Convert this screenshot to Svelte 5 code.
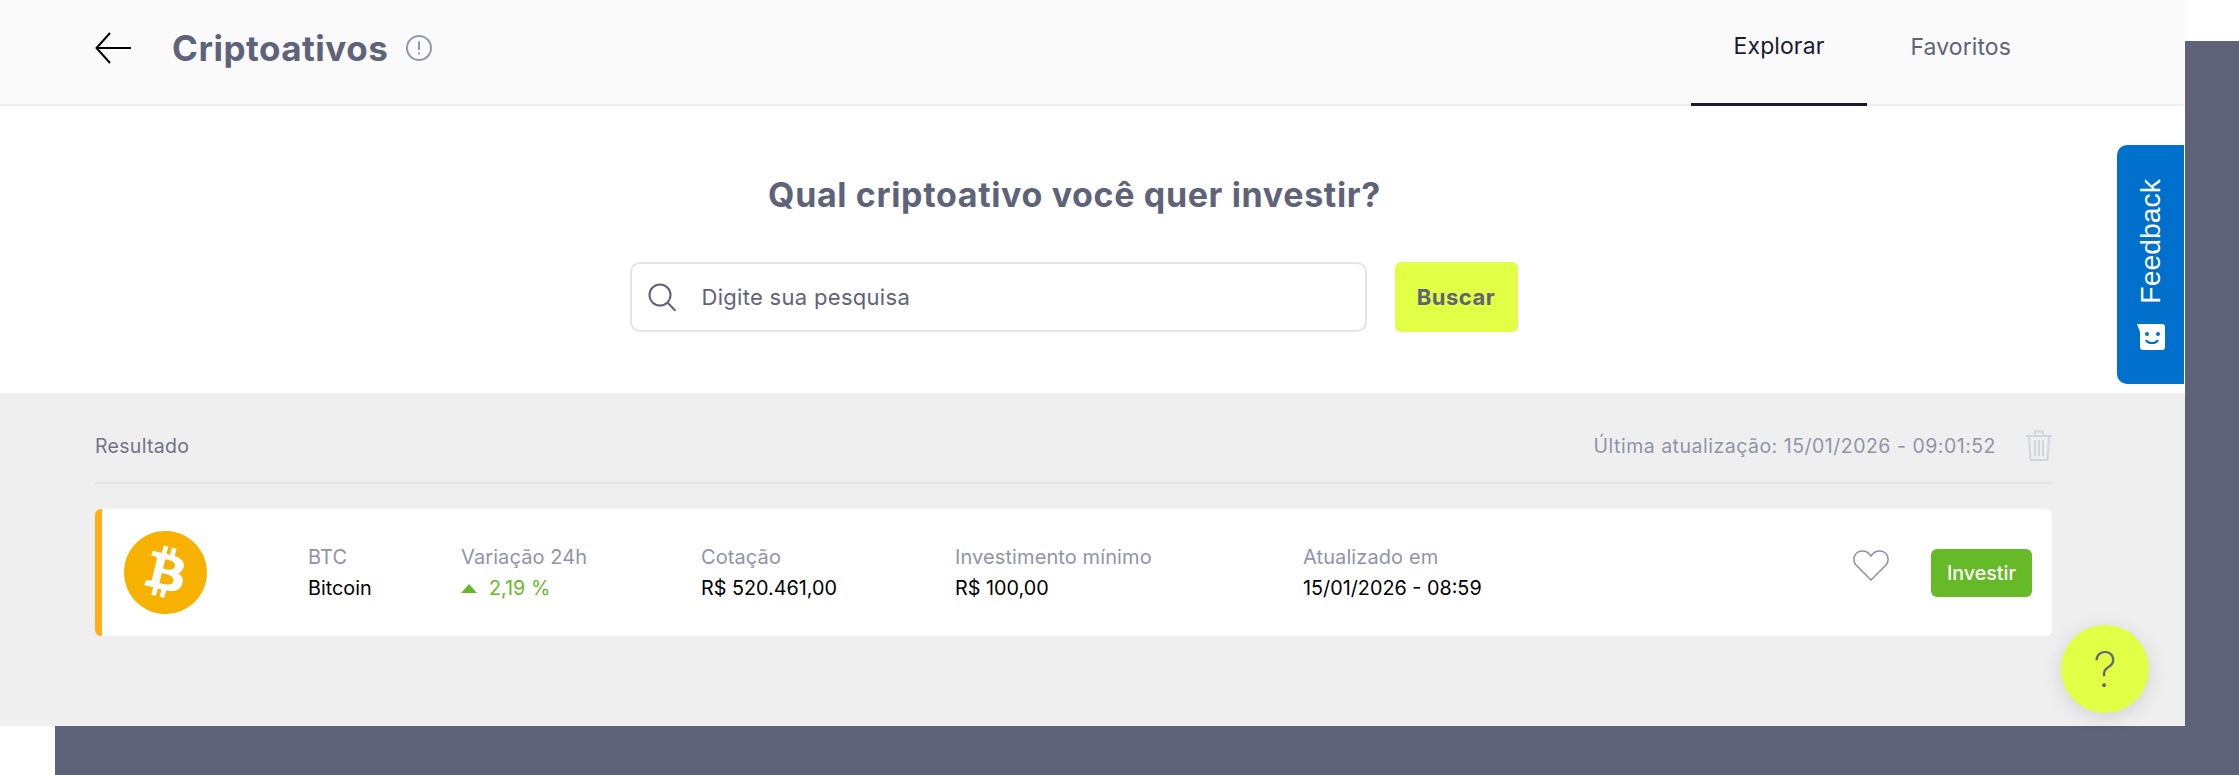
<script>
  let columns = [
    { label: 'BTC', value: 'Bitcoin', width: 153 },
    { label: 'Variação 24h', value: '2,19 %', width: 240, up: true },
    { label: 'Cotação', value: 'R$ 520.461,00', width: 254 },
    { label: 'Investimento mínimo', value: 'R$ 100,00', width: 348 },
    { label: 'Atualizado em', value: '15/01/2026 - 08:59', width: 300 }
  ];
</script>

<div class="stage">
  <div class="backdrop"></div>

  <main class="window">
    <header class="topbar">
      <div class="heading">
        <svg class="back" viewBox="0 0 36 32" width="36" height="32" fill="none" stroke="#000" stroke-width="2">
          <path d="M36 16H1.5M15 1 1.5 16 15 31" />
        </svg>
        <h1>Criptoativos</h1>
        <svg class="info" viewBox="0 0 26 26" width="26" height="26" fill="none" stroke="#9398ad" stroke-width="2">
          <circle cx="13" cy="13" r="12" />
          <path d="M13 6.5v8.5M13 17.5v2" />
        </svg>
      </div>
      <nav class="tabs">
        <span class="tab active">Explorar</span>
        <span class="tab">Favoritos</span>
      </nav>
    </header>

    <section class="search">
      <h2>Qual criptoativo você quer investir?</h2>
      <div class="search-row">
        <div class="field">
          <svg viewBox="0 0 28 28" width="28" height="28" fill="none" stroke="#5f6379" stroke-width="2">
            <circle cx="12" cy="12" r="10.5" />
            <path d="M19.5 19.5 27.5 28" />
          </svg>
          <span>Digite sua pesquisa</span>
        </div>
        <button class="find">Buscar</button>
      </div>
    </section>

    <section class="results">
      <div class="results-head">
        <span class="title">Resultado</span>
        <div class="updated">
          <span>Última atualização: 15/01/2026 - 09:01:52</span>
          <svg viewBox="0 0 26 31" width="26" height="31" fill="none" stroke="#d3d5de" stroke-width="2">
            <path d="M0 6h26M9 5V1.500h8V5M3 6l1.500 24h17L23 6M9 10v16M13 10v16M17 10v16" />
          </svg>
        </div>
      </div>

      <article class="card">
        <svg class="coin" viewBox="0 0 24 24" width="83" height="83">
          <path fill="#f7b100" d="M23.638 14.904c-1.602 6.43-8.113 10.34-14.542 8.736C2.67 22.05-1.244 15.525.362 9.105 1.962 2.67 8.475-1.243 14.9.358c6.43 1.605 10.342 8.115 8.738 14.548v-.002zm-6.35-4.613c.24-1.59-.974-2.45-2.64-3.03l.54-2.153-1.315-.33-.525 2.107c-.345-.087-.705-.167-1.064-.25l.526-2.127-1.32-.33-.54 2.165c-.285-.067-.565-.132-.84-.2l-1.815-.45-.35 1.407s.975.225.955.236c.535.136.63.486.615.766l-1.477 5.92c-.075.166-.24.406-.614.314.015.02-.96-.24-.96-.24l-.66 1.51 1.71.426.93.242-.54 2.19 1.32.327.54-2.17c.36.1.705.19 1.05.273l-.51 2.154 1.32.33.545-2.19c2.24.427 3.93.257 4.64-1.774.57-1.637-.03-2.58-1.217-3.196.854-.193 1.5-.76 1.68-1.93h.01zm-3.01 4.22c-.404 1.64-3.157.75-4.05.53l.72-2.9c.896.23 3.757.67 3.33 2.37zm.41-4.24c-.37 1.49-2.662.735-3.405.55l.654-2.64c.744.18 3.137.524 2.75 2.084v.006z" />
        </svg>
        <div class="cols">
          {#each columns as col}
            <div class="col" style="width: {col.width}px">
              <span class="label">{col.label}</span>
              <span class="value" class:up={col.up}>
                {#if col.up}<i class="arrow"></i>{/if}{col.value}
              </span>
            </div>
          {/each}
        </div>
        <svg class="heart" viewBox="0 0 36 31" width="36" height="31" fill="none" stroke="#8d90a6" stroke-width="1.500">
          <path d="M18 30 3 15C-1 10 1 1.500 9 1c4-.2 7 2 9 5 2-3 5-5.200 9-5 8 .5 10 9 6 14Z" />
        </svg>
        <button class="invest">Investir</button>
      </article>
    </section>

    <aside class="feedback">
      <span>Feedback</span>
      <svg viewBox="0 0 28 26" width="28" height="26">
        <path fill="#fff" d="M0 0h25a3 3 0 0 1 3 3v20a3 3 0 0 1-3 3H6a3 3 0 0 1-3-3V8Z" />
        <circle cx="10" cy="10" r="2" fill="#0070cd" />
        <circle cx="21" cy="10" r="2" fill="#0070cd" />
        <path d="M9 16c2 4 10 4 12 0" fill="none" stroke="#0070cd" stroke-width="2.200" />
      </svg>
    </aside>

    <button class="help">?</button>
  </main>
</div>

<style>
  :global(body) {
    background: #fff;
    overflow: hidden;
  }

  .stage {
    display: grid;
    width: 2239px;
    height: 775px;
    font-family: Inter, "Noto Sans", sans-serif;
  }

  .backdrop,
  .window {
    grid-area: 1 / 1;
  }

  .backdrop {
    margin: 41px 0 0 55px;
    background: #5f6379;
  }

  .window {
    position: relative;
    display: flex;
    flex-direction: column;
    width: 2185px;
    height: 726px;
    background: #fff;
  }

  .topbar {
    display: flex;
    justify-content: space-between;
    height: 106px;
    box-sizing: border-box;
    padding: 0 131px 0 95px;
    background: #fafafa;
    border-bottom: 2px solid #efefef;
  }

  .heading {
    display: flex;
    align-items: center;
    padding-bottom: 8px;
  }

  .back {
    margin-right: 41px;
  }

  h1 {
    margin: 0 18px 0 0;
    font-size: 35px;
    font-weight: 700;
    letter-spacing: .5px;
    color: #5f6379;
  }

  .tabs {
    display: flex;
  }

  .tab {
    display: flex;
    align-items: center;
    height: 106px;
    box-sizing: border-box;
    padding: 0 43px 12px;
    font-size: 23px;
    letter-spacing: .1px;
    color: #5f6379;
  }

  .tab.active {
    color: #1a1b33;
    border-bottom: 3px solid #1a1b33;
  }

  .search {
    display: flex;
    flex-direction: column;
    align-items: center;
    height: 287px;
    box-sizing: border-box;
    padding: 68px 38px 0 0;
  }

  h2 {
    margin: 0 0 46px 2px;
    font-size: 34px;
    line-height: 42px;
    font-weight: 700;
    letter-spacing: .64px;
    color: #5f6379;
  }

  .search-row {
    display: flex;
    gap: 28px;
  }

  .field {
    display: flex;
    align-items: center;
    gap: 26px;
    width: 737px;
    height: 70px;
    box-sizing: border-box;
    padding-left: 16px;
    border: 2px solid #e4e4e6;
    border-radius: 10px;
    font-size: 22px;
    letter-spacing: .3px;
    color: #5f6379;
  }

  .find {
    width: 123px;
    height: 70px;
    border: 0;
    border-radius: 6px;
    background: #e0ff45;
    font: 700 22px Inter, sans-serif;
    letter-spacing: .5px;
    color: #5f6379;
  }

  .results {
    flex: 1;
    padding: 0 133px 0 95px;
    background: #efefef;
  }

  .results-head {
    display: flex;
    justify-content: space-between;
    align-items: center;
    height: 91px;
    box-sizing: border-box;
    padding-top: 16px;
    border-bottom: 2px solid #e4e4e6;
  }

  .title {
    font-size: 19.500px;
    letter-spacing: .3px;
    color: #6f738a;
  }

  .updated {
    display: flex;
    align-items: center;
    gap: 30px;
    font-size: 19.500px;
    letter-spacing: .5px;
    color: #9094a8;
  }

  .card {
    display: flex;
    align-items: center;
    height: 127px;
    box-sizing: border-box;
    margin-top: 25px;
    padding: 0 20px 0 22px;
    background: #fff;
    border-left: 7px solid #ffae17;
    border-radius: 6px;
  }

  .cols {
    display: flex;
    margin: 1px 0 0 101px;
    flex: 1;
  }

  .col {
    display: flex;
    flex-direction: column;
    gap: 8px;
  }

  .label {
    font-size: 20px;
    line-height: 23px;
    letter-spacing: .1px;
    color: #9094a8;
  }

  .value {
    display: flex;
    align-items: center;
    font-size: 19.800px;
    line-height: 23px;
    color: #000;
  }

  .value.up {
    color: #66b927;
  }

  .arrow {
    width: 0;
    height: 0;
    margin-right: 12px;
    border: 8px solid transparent;
    border-top: 0;
    border-bottom: 9px solid #66b927;
  }

  .heart {
    margin: -14px 42px 0 0;
  }

  .invest {
    width: 101px;
    height: 48px;
    border: 0;
    border-radius: 6px;
    background: #66b927;
    font: 500 19.600px Inter, sans-serif;
    color: #fff;
  }

  .feedback {
    position: absolute;
    top: 145px;
    right: 1px;
    display: flex;
    flex-direction: column;
    align-items: center;
    gap: 20px;
    width: 67px;
    height: 239px;
    box-sizing: border-box;
    padding-top: 34px;
    background: #0070cd;
    border-radius: 10px 0 0 10px;
    color: #fff;
    font: 28.400px "Liberation Sans", sans-serif;
  }

  .feedback span {
    writing-mode: vertical-rl;
    transform: rotate(180deg);
  }

  .help {
    position: absolute;
    top: 625px;
    left: 2061px;
    width: 88px;
    height: 88px;
    padding: 0;
    border: 0;
    border-radius: 50%;
    background: #e0ff45;
    box-shadow: 0 4px 20px rgba(0, 0, 0, .12);
    font: 200 48px Inter, sans-serif;
    color: #5f6379;
  }
</style>
